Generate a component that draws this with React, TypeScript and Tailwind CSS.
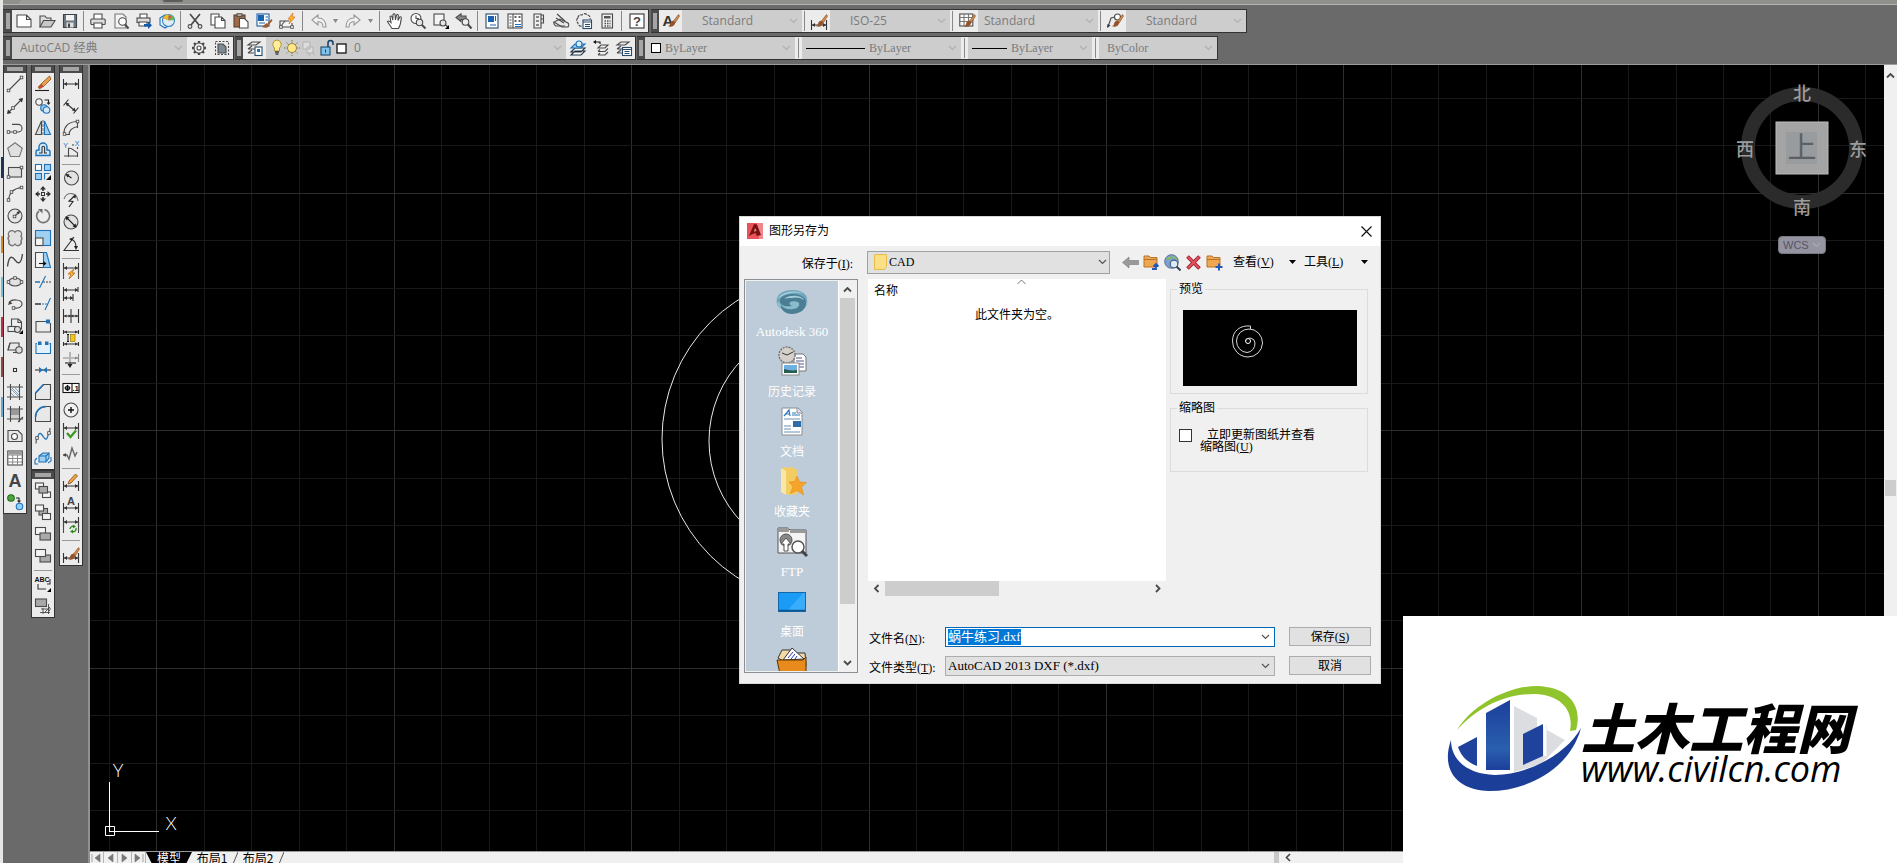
import React, { useEffect, useRef } from 'react';

const INK = '#4a4a4a';
const BLUE = '#1f72b8';
const SKY = '#9fd0f2';

type IconProps = { children: React.ReactNode; size?: number };

function Icon({ children, size = 16 }: IconProps) {
  return (
    <svg
      width={size}
      height={size}
      viewBox={`0 0 ${size} ${size}`}
      fill="none"
      stroke={INK}
      strokeWidth="1.1"
      className="shrink-0 overflow-visible"
      aria-hidden="true"
    >
      {children}
    </svg>
  );
}

// small square grip point used by the drawing tools
function Node({ x, y }: { x: number; y: number }) {
  return <rect x={x - 1.3} y={y - 1.3} width="2.6" height="2.6" fill="#f4f4f4" stroke="#444" strokeWidth=".8" />;
}

// dimension base: two vertical ticks and an arrow line
function DimBase({ y = 8 }: { y?: number }) {
  return (
    <g stroke="#333">
      <path d={`M.5 ${y - 5}v10M15.5 ${y - 5}v10M1 ${y}h14`} />
      <path d={`M1 ${y}l3 -2v4zM15 ${y}l-3 -2v4z`} fill="#333" stroke="none" />
    </g>
  );
}

function Brush() {
  return (
    <g stroke="none">
      <path d="M15.5 1.5L10.5 8l2 1.5L16.5 3z" fill="#d98a4a" stroke="#7a4a25" strokeWidth=".6" />
      <path d="M10.3 7.8c-2 .2-3 1.6-3.3 3.2-.2 1.2-1 1.8-2 2.2 3 1.2 6.5.2 7.5-3.7z" fill="#96522b" />
    </g>
  );
}

const drawIcons: [string, React.ReactNode][] = [
  ['直线', <><path d="M2 14L14 2" /><Node x={1.5} y={14.5} /><Node x={14.5} y={1.5} /></>],
  ['构造线', <><path d="M1 15L15 1" /><path d="M0 16l1-4.500 3.500 3.500zM16 0l-1 4.500L11.500 1z" fill="#333" stroke="none" /><Node x={6} y={10} /></>],
  ['多段线', <><path d="M2 12h9a4 3.800 0 0 0 0-7.600H5" /><Node x={1.5} y={12} /><Node x={8} y={12} /></>],
  ['多边形', <path d="M8 .8l7.300 5.500-2.800 8.200h-9L.7 6.300z" fill="#e0e0e0" stroke="#777" />],
  ['矩形', <><rect x="1.500" y="3.500" width="13" height="9.500" fill="#e0e0e0" /><Node x={1.5} y={13} /><Node x={14.5} y={3.5} /></>],
  ['圆弧', <><path d="M1.500 14.500C2 8 6 2.500 14.500 1.500" /><Node x={1.5} y={14} /><Node x={4.5} y={6} /><Node x={14.5} y={1.5} /></>],
  ['圆', <><circle cx="8" cy="8" r="7" fill="#e6e6e6" /><path d="M8 8l4-4" /><path d="M13 3l-1 3.500-2.500-2.500z" fill="#333" stroke="none" /><Node x={7.5} y={8.5} /></>],
  ['修订云线', <path d="M8 2.200a3.500 3.500 0 0 1 6 4 3.500 3.500 0 0 1 0 4.500 3.500 3.500 0 0 1-6 3.500 3.500 3.500 0 0 1-6-3.500 3.500 3.500 0 0 1 0-4.500 3.500 3.500 0 0 1 6-4z" fill="#e2e2e2" stroke="#777" strokeWidth="1.400" />],
  ['样条曲线', <path d="M.5 14.500C2 3 5 4 8 8s6 5 7.500-6" strokeWidth="1.400" />],
  ['椭圆', <><ellipse cx="8" cy="8" rx="6.500" ry="4" fill="#e2e2e2" /><Node x={1.5} y={8} /><Node x={14.5} y={8} /><Node x={8} y={4} /></>],
  ['椭圆弧', <><path d="M2 7C4 2.500 15 3 15 8c0 3.500-4 4.500-8 4" /><path d="M1 9l1.500-4 3 2.500z" fill="#444" stroke="none" /><Node x={6.5} y={12} /></>],
  ['插入块', <><path d="M4.500 1h7l3 3v7h-10z" fill="#eee" /><path d="M11 1v3.500h3.500" /><rect x="1" y="8.500" width="8" height="5" fill="#eee" /><circle cx="10.500" cy="11.500" r="3" fill="#ddd" /><path d="M16 12v4h-4z" fill="#000" stroke="none" /></>],
  ['创建块', <><path d="M3 3h9v7H1z" fill="#e8e8e8" /><path d="M3 3L1 10" /><circle cx="12" cy="10" r="3.200" fill="#ddd" /><path d="M6 12.500h4" /></>],
  ['点', <rect x="6.500" y="6.500" width="3" height="3" fill="#fff" stroke="#333" />],
  ['图案填充', <><path d="M3.500 0v16M12.500 0v16M0 3h16M0 13h16" /><path d="M4 5l8 8M4 9l4 4M8 4l4.500 4.500M5 4l7 7" stroke="#6a8fae" strokeWidth=".8" /></>],
  ['渐变色', <><rect x="4" y="3.500" width="8.500" height="9" fill="#9a9a9a" stroke="none" /><rect x="4" y="9" width="8.500" height="4" fill="#d0d0d0" stroke="none" /><path d="M3.500 0v16M12.500 0v16M0 3h16M0 13h16M11 16l5-5" /></>],
  ['面域', <><path d="M1 2.500h10l4 4v7H1z" fill="#e8e8e8" /><circle cx="7.500" cy="8.500" r="3" fill="#fff" /></>],
  ['表格', <><rect x=".8" y="1" width="14.500" height="14" fill="#fff" /><rect x="1.400" y="1.500" width="13.400" height="3" fill="#9a9a9a" stroke="none" /><path d="M1 5h14M1 8.500h14M1 12h14M5.700 5v10M10.500 5v10" stroke="#888" strokeWidth="1" /></>],
  ['多行文字', <text x="8" y="14.500" textAnchor="middle" fontSize="18" fontFamily="Liberation Sans" fontWeight="bold" fill="#444" stroke="none">A</text>],
  ['添加选定对象', <><circle cx="4" cy="4" r="3.300" fill="#4ba53c" stroke="#276b1d" /><circle cx="12.500" cy="12.500" r="3.300" fill="#8fd0ff" stroke={BLUE} /><path d="M9 4h3v3" stroke="#222" /><path d="M10 6.500h4L12 9z" fill="#222" stroke="none" /></>],
];

const modifyIcons: [string, React.ReactNode][] = [
  ['删除', <><path d="M14.500 0L6 8l2.500 2.500L16 3z" fill="#e9a24a" stroke="#8a4a1a" strokeWidth=".8" /><path d="M6 8l-3 3L4.500 13l4-2.500z" fill="#d4442e" stroke="#862" strokeWidth=".6" /><path d="M0 14.500h14" stroke="#222" /></>],
  ['复制', <><circle cx="4" cy="4" r="3.200" fill="#f4f4f4" /><circle cx="9" cy="10" r="3.300" fill={SKY} stroke={BLUE} /><circle cx="11.500" cy="12" r="3.300" fill="#cfe8fa" stroke={BLUE} /><path d="M9.500 2h4v3" stroke="#222" /><path d="M11.500 4.500h4l-2 2.500z" fill="#222" stroke="none" /></>],
  ['镜像', <><path d="M6.500 1v13.500h-6z" fill="#ddd" /><path d="M9.500 1v13.500h6z" fill={SKY} stroke={BLUE} /><path d="M8 0v16" stroke="#777" strokeDasharray="3 1" /></>],
  ['偏移', <><path d="M1 13.500V10a2 2 0 0 1 2-2h1V5a4 4 0 0 1 8 0v3h1a2 2 0 0 1 2 2v3.500z" fill="#cfe8fa" stroke={BLUE} strokeWidth="1.400" /><path d="M4 11h3V5.500a1.300 1.300 0 0 1 2.600 0V11H12" stroke="#333" /></>],
  ['阵列', <><rect x=".5" y=".5" width="6" height="6" fill="#fff" stroke={BLUE} /><rect x="9.500" y=".5" width="6" height="6" fill={SKY} stroke={BLUE} /><rect x=".5" y="9.500" width="6" height="6" fill={SKY} stroke={BLUE} /><path d="M9.500 15.500v-6h5" stroke={BLUE} /><path d="M16 11v5h-5z" fill="#111" stroke="none" /></>],
  ['移动', <><rect x="6.500" y="6.500" width="3" height="3" fill="#fff" stroke="#333" /><path d="M8 0l3 3.500H5zM8 16l3-3.500H5zM0 8l3.500-3v6zM16 8l-3.500-3v6z" fill="#333" stroke="none" /><path d="M8 3v2M8 11v2M3 8h2M11 8h2" stroke="#333" strokeWidth="1.600" /></>],
  ['旋转', <><path d="M4 3A6.500 6.500 0 1 0 9.500 1.700" stroke="#777" strokeWidth="1.700" /><path d="M3 1h4.500v4.500z" fill="#666" stroke="none" /></>],
  ['缩放', <><rect x=".5" y=".5" width="15" height="15" fill={SKY} stroke={BLUE} /><rect x=".5" y="8" width="7.500" height="7.500" fill="#f4f4f4" /></>],
  ['拉伸', <><path d="M.5.5h8v15h-8z" fill="#f4f4f4" /><path d="M8.500.5h3l4 15h-7z" fill={SKY} stroke={BLUE} /><path d="M4 11.500h5" stroke="#111" /><path d="M11.500 11.500L8.500 9v5z" fill="#111" stroke="none" /></>],
  ['修剪', <><path d="M0 8h5" stroke={BLUE} strokeWidth="1.500" /><path d="M8 8h8" stroke="#444" strokeDasharray="2 1" /><path d="M4.500 14l6-12" stroke={BLUE} /></>],
  ['延伸', <><path d="M0 8h6" stroke="#333" strokeWidth="1.500" /><path d="M7 8h6" stroke={BLUE} strokeDasharray="2 1" /><path d="M10 14l5.500-12" stroke={BLUE} /></>],
  ['打断于点', <><path d="M11 3.500H1v10.500h14.500V5" /><rect x="11" y="1.500" width="4" height="4" fill={BLUE} stroke="none" /></>],
  ['打断', <><path d="M2 3.500H1v10h14.500v-10h-1" fill="#e2f1fc" stroke={BLUE} /><rect x="3" y="1.500" width="3.500" height="3.500" fill={BLUE} stroke="none" /><rect x="10" y="1.500" width="3.500" height="3.500" fill={BLUE} stroke="none" /></>],
  ['合并', <><path d="M0 8h16" stroke="#333" /><path d="M8 8L4 5v6zM8 8l4-3v6z" fill={BLUE} stroke="none" /></>],
  ['倒角', <><path d="M.5 15.500V9l8-8.500h7v15z" fill="#e8e8e8" /><path d="M.5 9l8-8.500" stroke={BLUE} strokeWidth="1.600" /></>],
  ['圆角', <><path d="M.5 15.500V12C.5 5 5 .5 12 .5h3.500v15z" fill="#e8e8e8" /><path d="M.5 11C.5 5 5 .5 11 .5" stroke={BLUE} strokeWidth="1.600" /></>],
  ['光顺曲线', <><path d="M1 15.500c0-3 0-4 1-5" /><path d="M2.500 10C4 3 6 5 8.500 9s4 2 5-4" stroke={BLUE} strokeWidth="1.300" /><path d="M14.500 5l.5-5" /><Node x={2} y={10} /><Node x={14} y={5} /></>],
  ['分解', <><path d="M4 6l4-3h6v5l-3 4H4z" fill={SKY} stroke={BLUE} /><path d="M4 6h7v6M11 6l3-3M2 8l-2 2v4h3M13 13l3-2V7" stroke={BLUE} /></>],
];

const orderIcons: [string, React.ReactNode][] = [
  ['前置', <><rect x=".5" y="1" width="8" height="6" fill="#f4f4f4" /><rect x="7.500" y="10" width="8" height="5.500" fill="#f4f4f4" /><rect x="4" y="4.500" width="8.500" height="6.500" fill="#aaa" /></>],
  ['后置', <><rect x="4" y="4.500" width="8.500" height="6.500" fill="#aaa" /><rect x=".5" y="1" width="8" height="6" fill="#f4f4f4" /><rect x="7.500" y="9.500" width="8" height="6" fill="#f4f4f4" /></>],
  ['置于对象之上', <><rect x=".5" y="1.500" width="10" height="7" fill="#f4f4f4" /><rect x="5" y="7" width="10.500" height="7" fill="#aaa" /></>],
  ['置于对象之下', <><rect x="5" y="7" width="10.500" height="7" fill="#aaa" /><rect x=".5" y="1.500" width="10" height="7" fill="#f4f4f4" /></>],
];

const orderTailIcons: [string, React.ReactNode][] = [
  ['注释前置', <><text x="7" y="6" textAnchor="middle" fontSize="7" fontFamily="Liberation Sans" fontWeight="bold" fill="#111" stroke="none">ABC</text><path d="M3 8v5h8M12 8h3V3" stroke="#333" /><path d="M16 12v4h-4z" fill="#000" stroke="none" /></>],
  ['图案填充后置', <><rect x=".5" y="1" width="11" height="7.500" fill="#a8a8a8" /><path d="M6 11h10M13.500 6v10M5 14.500h10M8 10v6M9 15l6-6M12 15l3-3" strokeWidth=".9" /></>],
];

const dimIcons: ([string, React.ReactNode] | null)[] = [
  ['线性', <DimBase />],
  ['对齐', <><path d="M3 5l9 8" stroke="#333" /><path d="M.5 7.500l5-6M10.500 15.500l5-6" stroke="#333" /><path d="M2.500 4.500l4 1-2.500 3zM13 13.500l-4-1 2.500-3z" fill="#333" stroke="none" /></>],
  ['弧长', <><path d="M1 13C1 7 5 2 13.500 1.500" /><path d="M6 15c0-5 3-7.500 9-8.500" /><Node x={1.5} y={14} /><Node x={14.5} y={1.5} /><path d="M14.500 3v5M3 14.500h4" /></>],
  ['坐标', <><path d="M5.500 6v9M1 14h14M5.500 6c4 0 6 3 9 5v4" /><path d="M14.500 5v2M10 2v2" /><text x="2.500" y="6" textAnchor="middle" fontSize="7" fontFamily="Liberation Sans" fill={BLUE} stroke="none">Y</text><text x="14" y="3.500" textAnchor="middle" fontSize="7" fontFamily="Liberation Sans" fill={BLUE} stroke="none">X</text></>],
  null,
  ['半径', <><circle cx="8.500" cy="8" r="7" fill="#e2e2e2" /><path d="M8.500 8L4 5" stroke="#222" /><path d="M2.500 4l4 .5-2 3z" fill="#222" stroke="none" /></>],
  ['折弯', <><path d="M1 7C4-1 14 0 15 9" stroke="#777" /><path d="M11.500 4L6 9l4 .5L6 15" stroke="#222" /><path d="M13 2.500l-.5 4-3-2z" fill="#222" stroke="none" /></>],
  ['直径', <><circle cx="8" cy="8" r="7" fill="#e2e2e2" /><path d="M3 3l10 10" stroke="#222" /><path d="M2.500 2.500l4 1-3 3zM13.500 13.500l-4-1 3-3z" fill="#222" stroke="none" /></>],
  ['角度', <><path d="M11 1L1 14.500h15" stroke="#333" /><path d="M7.500 3c4 1 5.500 5 5.500 8" stroke="#333" /><path d="M13 14l-2-4h4zM6 3l4-1.500L9 5z" fill="#222" stroke="none" /></>],
  null,
  ['快速标注', <><DimBase y={4} /><path d="M.5 4v11M15.500 4v11" /><path d="M11 5l-6 5h3l-2 5 6-6H9z" fill="#f6c12f" stroke="#c4661a" strokeWidth=".8" /></>],
  ['基线', <><path d="M.5 1v14M15 1v5M10 8v7M1 4h14M1 12h9" stroke="#333" /><path d="M1 4l3-2v4zM15 4l-3-2v4zM1 12l3-2v4zM10 12l-3-2v4z" fill="#333" stroke="none" /></>],
  ['连续', <><path d="M.5 1v14M15.500 1v14M8 1v14M1 8h14" stroke="#333" /><path d="M1 8l2.500-1.500v3zM8 8L5.500 6.500v3zM8 8l2.500-1.500v3zM15 8l-2.500-1.500v3z" fill="#333" stroke="none" /></>],
  ['等距标注', <><path d="M.5 0v4M15.500 0v4M.5 12v4M15.500 12v4M1 2h14M1 14h14" stroke="#333" /><path d="M1 2l3-1.500v3zM15 2l-3-1.500v3zM1 14l3-1.500v3zM15 14l-3-1.500v3z" fill="#333" stroke="none" /><rect x="7.500" y="4.500" width="4.500" height="7" fill="#f5c518" stroke="#8a6a00" strokeWidth=".6" /><path d="M5 4.500v7M4 4.500h2M4 11.500h2" stroke="#111" /></>],
  ['折断标注', <><path d="M0 6h6M15.500 2v8M8 6h7M7 0v13" stroke="#888" /><path d="M2 11h11" stroke="#222" /><path d="M7 16l-2.500-4h5z" fill="#222" stroke="none" /><path d="M15 6l-3-1.500v3z" fill="#888" stroke="none" /></>],
  null,
  ['公差', <><rect x="0" y="3.500" width="16" height="9" fill="#fff" stroke="#111" /><path d="M9 3.500v9" stroke="#111" /><circle cx="4.500" cy="8" r="2" stroke="#111" /><path d="M1.500 8h6M4.500 5v6" stroke="#111" /><text x="12.500" y="11" textAnchor="middle" fontSize="8" fontFamily="Liberation Sans" fontWeight="bold" fill="#111" stroke="none">.1</text></>],
  ['圆心标记', <><circle cx="8" cy="8" r="7" fill="#f0f0f0" /><path d="M5 8h6M8 5v6" stroke="#111" strokeWidth="1.400" /></>],
  ['检验', <><DimBase y={4} /><path d="M.5 4v11M15.500 4v11" /><path d="M4 9l3.500 4L13 6.500" stroke="#3c9a28" strokeWidth="2.400" /></>],
  ['折弯线性', <><path d="M0 9h4l2 4 3-11 3 8 2-4" stroke="#666" strokeWidth="1.400" /><path d="M0 9l3-2v4z" fill="#444" stroke="none" /></>],
  null,
  ['编辑标注', <><DimBase y={12} /><path d="M12.500 0L6 7l-1 3 3-1 6.500-7z" fill="#f0a43c" stroke="#8a4a1a" strokeWidth=".8" /></>],
  ['编辑标注文字', <><DimBase y={12} /><text x="8" y="8.500" textAnchor="middle" fontSize="11" fontFamily="Liberation Sans" fontWeight="bold" fill="#444" stroke="none">A</text></>],
  ['标注更新', <><DimBase y={4} /><path d="M.5 4v11M15.500 4v11" /><path d="M7 11a3 3 0 0 1 4-2.500M13 10a3 3 0 0 1-4 3.500" stroke="#2f8a1e" strokeWidth="1.400" /><path d="M10 6.500l3 2-3 2zM10 15.500l-3-2 3-2z" fill="#2f8a1e" stroke="none" /></>],
  null,
  ['标注样式', <><DimBase y={12} /><Brush /></>],
];

type BarItem = [string, React.ReactNode] | number;

// numbers are separators with their slot width
const standardBar: BarItem[] = [
  ['新建', <path d="M1 2h9.500L15 6.500V14H1zM10.500 2v4.500H15" fill="#fff" />],
  ['打开', <><path d="M1 14V3h5l1.500 2H12v3" fill="#ddd" /><path d="M1 14l3.500-6.500H16L12 14z" fill="#c8c8c8" /></>],
  ['保存', <><path d="M1.500 1.500h13v13h-13z" fill="#6e7780" stroke="#3b4248" /><rect x="4" y="2" width="8" height="5.500" fill="#f2f2f2" stroke="none" /><rect x="4.500" y="9.500" width="7" height="5" fill="#ddd" stroke="none" /><rect x="6" y="10.500" width="2" height="4" fill="#444" stroke="none" /></>],
  5,
  ['打印', <><path d="M4 6V1h8v5" fill="#fff" /><rect x=".8" y="6" width="14.400" height="5.500" rx="1" fill="#ddd" /><path d="M4 10h8v5H4z" fill="#fff" /></>],
  ['打印预览', <><path d="M2 1h8l3 3v11H2z" fill="#f4f4f4" stroke="#777" /><circle cx="9.500" cy="8.500" r="3.800" fill="#fff" /><path d="M12 11.500l3.500 4" strokeWidth="2" /></>],
  ['发布', <><path d="M4 5V1h7v4" fill="#fff" /><rect x="1" y="5" width="13" height="4.500" fill="#ddd" /><path d="M3 9h8v4H3z" fill="#fff" /><path d="M8 11h4V8.500l4 3.800-4 3.700v-2.500H8z" fill="#1559a8" stroke="none" /></>],
  ['三维打印', <><path d="M1 5l5-3 5 3v7l-5 3-5-3z" fill="#e6f2fb" stroke={BLUE} /><circle cx="9.500" cy="7.500" r="6" fill="#ddeefa" stroke="#3982bd" /><path d="M9.500 7.500V1.500a6 6 0 0 0-5.500 4z" fill="#efb62e" stroke="none" /><path d="M9.500 7.500l6-.5a6 6 0 0 0-6-5.500z" fill="#69b54b" stroke="none" /><path d="M9.500 7.500v-5l3 1z" fill="#e5482e" stroke="none" /></>],
  5,
  ['剪切', <><path d="M3 1l9 11M13 1L4 12" strokeWidth="1.700" /><circle cx="3" cy="13.500" r="1.900" /><circle cx="13" cy="13.500" r="1.900" /></>],
  ['复制', <><path d="M1 1h8v11H1z" fill="#fff" /><path d="M5 4h6.500L15 7.500V15H5zM11.500 4v3.500H15" fill="#fff" /></>],
  ['粘贴', <><rect x="1" y="2" width="11" height="12" fill="#9c6a48" stroke="#5f412c" /><rect x="4" y=".8" width="5" height="2.500" fill="#ccc" /><path d="M6.500 5.500h5L15 9v6H6.500z" fill="#fff" /></>],
  ['特性匹配', <><rect x="1" y="1" width="12" height="12" fill="#fff" stroke="#1a5ea0" /><rect x="2" y="2" width="6" height="6" fill="#1a62b0" stroke="none" /><path d="M9.500 4h2.500M9.500 7h2.500M3 10h6" stroke="#1a62b0" /><path d="M15.500 6l-4 4 1.500 1.500 3.500-4zM11 10c-2 .5-3 3-5 4 3 1.500 6.500 1 7-2z" fill="#a05a2c" stroke="none" /></>],
  ['块编辑器', <><path d="M10 8H1v6h12v-4" fill="#f4f4f4" /><path d="M1 14l5-6" /><Node x={2} y={14} /><Node x={13} y={14} /><path d="M14 0L9 6h2.500L10 11l6-7h-3z" fill="#f9b82b" stroke="#d9701d" strokeWidth=".7" /></>],
  9,
];

const editBarEnd: BarItem[] = [
  7,
  ['实时平移', <path d="M5 15.500C3.500 13 1.500 10.500.5 8.500c1-1 2-.5 3.500 1L3 3.500c.8-1 1.800-.5 2 .5l.8 3L6 1.500c.6-1 1.700-1 2 0L8.500 7l1-5c.7-1 1.800-.5 1.800.5L11 7.500l1.800-3.500c1-.6 1.700 0 1.500 1-.3 4-1 7.500-2.800 10.500z" fill="#fff" />],
  ['实时缩放', <><circle cx="6" cy="5.500" r="5" fill="#fff" /><path d="M6 2.500v3h3" /><circle cx="9.500" cy="9.500" r="3.200" fill="#e6e6e6" /><path d="M12 12l3.500 3.500" strokeWidth="2" /></>],
  ['窗口缩放', <><rect x="1" y="1" width="10" height="11" fill="#f4f4f4" /><circle cx="10" cy="10" r="3" fill="#e6e6e6" /><path d="M12.500 12l2.500 2" strokeWidth="1.500" /><path d="M16 12v4h-4z" fill="#000" stroke="none" /></>],
  ['缩放上一个', <><path d="M0 4.500L5 .8v2.200h5v3.500H5v2z" fill="#888" /><circle cx="9.500" cy="9" r="3.300" fill="#eee" /><path d="M12 11.500l3.500 4" strokeWidth="2" /></>],
  5,
  ['特性', <><rect x="2" y="1" width="12" height="14" fill="#fff" stroke="#284b6c" /><rect x="4" y="3" width="6" height="6" fill="#1a62b0" stroke="none" /><path d="M11.500 3v5M6 12h6" stroke="#1a62b0" /></>],
  ['设计中心', <><rect x="1" y="1" width="14" height="14" fill="#fff" /><path d="M6 1v14" /><path d="M2.500 4h2M2.500 7h2M2.500 10h2M2.500 13h2" /><path d="M7.500 3h2v2h-2zM11.500 3h2v2h-2zM7.500 7h2v2h-2zM11.500 7h2v2h-2z" fill="#666" stroke="none" /><path d="M8 11.500h6M8 13.500h6" stroke={BLUE} /></>],
  ['工具选项板', <><path d="M4 1h7v14H4z" fill="#eee" /><path d="M11 2h2.500v4H11M11 6h2.500v4H11" /><path d="M6 3h3v2H6zM6 7h3v2H6zM6 11h3v2H6z" fill="#888" stroke="none" /></>],
  ['图纸集管理器', <><path d="M1 9l8 5h6c1-1 1-3 0-4L7 6z" fill="#e8e8e8" /><path d="M4 1l8 7M3 5l8 5" /><path d="M1 9c-.5 2 0 3 2 4h9" /></>],
  ['标记集管理器', <><path d="M2 5a3 3 0 0 1 4-3 3 3 0 0 1 5 0 3 3 0 0 1 3 4" strokeDasharray="3 1" /><path d="M2 5a3 3 0 0 0 0 5 3 3 0 0 0 4 3" strokeDasharray="3 1" /><rect x="7" y="7" width="8.500" height="8.500" fill="#fff" stroke="#284b6c" /><path d="M7 9h8.500M9 11.500h5M9 13.500h5" stroke="#284b6c" /></>],
  ['快速计算器', <><rect x="3" y="1" width="10.500" height="14" fill="#f0f0f0" /><rect x="5" y="3" width="6.500" height="2.500" fill="#555" stroke="none" /><path d="M5.500 8h6M5.500 10.500h6M5.500 13h6" strokeDasharray="1.500 1" strokeWidth="1.500" /></>],
  7,
  ['帮助', <><rect x="1" y="1" width="14" height="14" fill="#fff" stroke="#333" /><text x="8" y="13" textAnchor="middle" fontSize="13" fontFamily="Liberation Sans" fontWeight="bold" fill="#444" stroke="none">?</text></>],
];

function Grip({ wide = false }: { wide?: boolean }) {
  return (
    <div className={`flex shrink-0 items-center justify-center bg-[#4b4b4b] ${wide ? 'w-[9px]' : 'w-2'}`}>
      <div className="h-4 w-1 bg-[radial-gradient(#a5a5a5_1px,transparent_1px)] bg-[size:2px_2px]"></div>
    </div>
  );
}

function Toolbar({ children, wide }: { children: React.ReactNode; wide?: boolean }) {
  return (
    <div className="flex h-6 shrink-0 border-y border-r border-[#333] bg-[#ececec]">
      <Grip wide={wide} />
      {children}
    </div>
  );
}

function ToolButton({ label, children }: { label: string; children: React.ReactNode }) {
  return (
    <button aria-label={label} className="flex w-[23px] shrink-0 items-center justify-center">
      <Icon>{children}</Icon>
    </button>
  );
}

function BarItems({ items }: { items: BarItem[] }) {
  return (
    <>
      {items.map((item, i) =>
        typeof item === 'number' ? (
          <div key={i} className="flex shrink-0 justify-center py-px" style={{ width: item }}>
            <div className="w-px bg-[#888]"></div>
          </div>
        ) : (
          <ToolButton key={i} label={item[0]}>{item[1]}</ToolButton>
        )
      )}
    </>
  );
}

function Chevron({ className = '' }: { className?: string }) {
  return (
    <svg width="9" height="6" viewBox="0 0 9 6" className={`pointer-events-none shrink-0 ${className}`} fill="none" stroke="currentColor" strokeWidth="1.2" aria-hidden="true">
      <path d="M1 1l3.500 3.500L8 1" />
    </svg>
  );
}

type DropProps = { label: string; value: string; box: string; text?: string; lead?: React.ReactNode };

function Drop({ label, value, box, text = '', lead }: DropProps) {
  return (
    <div className={`flex shrink-0 items-center bg-[#cdcdcd] pr-1 text-[#7b7b7b] ${box}`}>
      {lead}
      <select aria-label={label} className={`h-full min-w-0 flex-1 appearance-none bg-transparent text-xs outline-none ${text}`} defaultValue={value}>
        <option>{value}</option>
      </select>
      <Chevron className="text-[#b0b0b0]" />
    </div>
  );
}

function Palette({ children }: { children: React.ReactNode }) {
  return (
    <div className="flex w-6 flex-col border-x border-b border-[#333] bg-[#ececec]">{children}</div>
  );
}

function PaletteGrip() {
  return (
    <div className="flex h-2 shrink-0 items-center justify-center bg-[#4b4b4b]">
      <div className="h-1 w-4 bg-[radial-gradient(#a5a5a5_1px,transparent_1px)] bg-[size:2px_2px]"></div>
    </div>
  );
}

function PaletteItems({ items }: { items: ([string, React.ReactNode] | null)[] }) {
  return (
    <>
      {items.map((item, i) =>
        item ? (
          <button key={i} aria-label={item[0]} className="flex h-[22px] w-full shrink-0 items-center justify-center">
            <Icon>{item[1]}</Icon>
          </button>
        ) : (
          <div key={i} className="flex h-[6px] shrink-0 items-center px-0.5">
            <div className="h-px w-full bg-[#999]"></div>
          </div>
        )
      )}
    </>
  );
}

function LayerLead() {
  return (
    <svg width="84" height="18" viewBox="0 0 84 18" className="ml-1 shrink-0" fill="none" aria-hidden="true">
      <path d="M7 1a4.500 4.500 0 0 1 2.500 8v3h-5V9A4.500 4.500 0 0 1 7 1z" fill="#ffef9a" stroke="#b9962c" />
      <path d="M5 13h4M5.500 15h3" stroke="#444" strokeWidth="1.400" />
      <path d="M22 1v16M14 9h16M16.500 3.500l11 11M27.500 3.500l-11 11" stroke="#7a7042" strokeDasharray="1.500 1" />
      <circle cx="22" cy="9" r="4.500" fill="#ffe88a" stroke="#a08a3a" />
      <path d="M33 3h7v7h-7zM37 8h6v6h-6z" fill="#ddd" stroke="#b3b3b3" />
      <path d="M38 14l2 3M42 13l3 3" stroke="#b3b3b3" />
      <rect x="51" y="8" width="9" height="8" fill="#7fc4ef" stroke="#123f66" />
      <path d="M58 8V4a2.500 2.500 0 0 1 5 0v2" stroke="#123f66" strokeWidth="1.500" />
      <path d="M55.500 10.500v3" stroke="#123f66" />
      <rect x="67" y="5" width="9" height="9" fill="#fff" stroke="#111" strokeWidth="1.300" />
    </svg>
  );
}

const layerSheets = <path d="M1 5l4-3h8l-4 3zM1 9l4-3M1 9h7M1 13l4-3M1 13h6" fill="none" />;

function Toolbars() {
  return (
    <header className="shrink-0 border-b border-[#9c9c9c] bg-[#6a6a6a]">
      <div className="flex h-[5px] border-b border-[#b4b4b0] bg-[#8f908c]">
        <div className="ml-4 h-full w-36 rounded-t-sm bg-[#9b9c98]"></div>
        <div className="h-0.5 w-5 rounded-b bg-[#5c5c5c]"></div>
      </div>
      <div className="flex flex-col gap-[3px] pt-1 pb-1">
        <div className="flex gap-0.5">
          <Toolbar wide>
            <BarItems items={standardBar} />
            <button aria-label="放弃" className="flex w-[23px] items-center justify-center">
              <Icon><path d="M1 7l6-5v3c5 0 8 3 8 9h-3c0-4-2-5.500-5-5.500v3.500z" fill="#f2f2f2" stroke="#999" /></Icon>
            </button>
            <button aria-label="放弃列表" className="flex w-[11px] items-center justify-center text-[#888]">
              <svg width="5" height="4" viewBox="0 0 5 4" aria-hidden="true"><path d="M0 0h5L2.500 4z" fill="currentColor" /></svg>
            </button>
            <button aria-label="重做" className="flex w-[23px] items-center justify-center">
              <Icon><path d="M15 7L9 2v3c-5 0-8 3-8 9h3c0-4 2-5.500 5-5.500v3.500z" fill="#f2f2f2" stroke="#999" /></Icon>
            </button>
            <button aria-label="重做列表" className="flex w-3 items-center justify-center text-[#888]">
              <svg width="5" height="4" viewBox="0 0 5 4" aria-hidden="true"><path d="M0 0h5L2.500 4z" fill="currentColor" /></svg>
            </button>
            <BarItems items={editBarEnd} />
          </Toolbar>
          <Toolbar>
            <ToolButton label="文字样式">
              <text x="5" y="12.500" textAnchor="middle" fontSize="15" fontFamily="Liberation Sans" fontWeight="bold" fill="#333" stroke="none">A</text>
              <Brush />
            </ToolButton>
            <Drop label="文字样式" value="Standard" box="w-[120px]" text="pl-5" />
            <BarItems items={[5]} />
            <ToolButton label="标注样式"><DimBase y={12} /><Brush /></ToolButton>
            <Drop label="标注样式" value="ISO-25" box="w-[120px]" text="pl-5" />
            <BarItems items={[5]} />
            <ToolButton label="表格样式">
              <rect x=".8" y="1" width="13" height="12" fill="#fff" />
              <path d="M1 4.500h13M1 8.500h12M5 1v12M9.500 1v12" stroke="#777" />
              <Brush />
            </ToolButton>
            <Drop label="表格样式" value="Standard" box="w-[120px]" text="pl-1.5" />
            <BarItems items={[5]} />
            <ToolButton label="多重引线样式">
              <path d="M1 14L4 5l4-1" />
              <circle cx="10.500" cy="4" r="3" fill="#fff" />
              <path d="M0 15l.5-4 3 1.500z" fill="#333" stroke="none" />
              <Brush />
            </ToolButton>
            <Drop label="多重引线样式" value="Standard" box="w-[120px]" text="pl-5" />
          </Toolbar>
        </div>
        <div className="flex gap-px">
          <Toolbar wide>
            <Drop label="工作空间" value="AutoCAD 经典" box="w-[175px]" text="pl-2" />
            <ToolButton label="工作空间设置">
              <path d="M8 1v2M8 13v2M1 8h2M13 8h2M3 3l1.500 1.500M11.500 11.500L13 13M13 3l-1.500 1.500M4.500 11.500L3 13" strokeWidth="2.400" />
              <circle cx="8" cy="8" r="5" fill="#f0f0f0" />
              <circle cx="8" cy="8" r="2" fill="#fff" />
            </ToolButton>
            <ToolButton label="我的工作空间">
              <rect x="1.500" y="1.500" width="13" height="13" strokeDasharray="2 1.500" />
              <path d="M4 4h5l3 3v6H4z" fill="#7d8b95" />
            </ToolButton>
          </Toolbar>
          <Toolbar>
            <ToolButton label="图层特性管理器">
              {layerSheets}
              <rect x="8" y="7" width="7" height="8.500" fill="#fff" stroke="#284b6c" />
              <rect x="10" y="9" width="3" height="3" fill={BLUE} stroke="none" />
            </ToolButton>
            <Drop label="图层" value="0" box="w-[300px]" lead={<LayerLead />} />
            <ToolButton label="将对象的图层置为当前">
              <path d="M1 12l4-4h10l-4 4zM1 15l4-4h10l-4 4z" fill="#fff" stroke="#234" />
              <path d="M1 8l4-4h10l-4 4z" fill={SKY} stroke={BLUE} />
              <circle cx="9" cy="4" r="3" fill="#d7ecfb" stroke={BLUE} />
            </ToolButton>
            <ToolButton label="上一个图层">
              <path d="M5 8l3-3h7l-3 3zM5 11.500l2-2M5 11.500h7l3-3M5 15l2-2M5 15h7l3-3" />
              <path d="M2 2h5v2" stroke="#111" /><path d="M0 2l3-2v4z" fill="#111" stroke="none" />
            </ToolButton>
            <ToolButton label="图层状态管理器">
              {layerSheets}
              <rect x="6.500" y="7.500" width="9" height="8" fill="#fff" stroke="#284b6c" />
              <path d="M6.500 9.500h9M8.500 11.500h5M8.500 13.500h5" stroke="#284b6c" />
            </ToolButton>
          </Toolbar>
          <Toolbar>
            <Drop
              label="颜色"
              value="ByLayer"
              box="w-[150px]"
              text="pl-1 font-['Liberation_Serif',serif]"
              lead={<span className="ml-1.5 size-2.5 shrink-0 border border-black bg-white"></span>}
            />
            <BarItems items={[7]} />
            <Drop
              label="线型"
              value="ByLayer"
              box="w-[159px]"
              text="pl-1 font-['Liberation_Serif',serif]"
              lead={<span className="ml-1 h-px w-[59px] shrink-0 bg-black"></span>}
            />
            <BarItems items={[7]} />
            <Drop
              label="线宽"
              value="ByLayer"
              box="w-[124px]"
              text="pl-1 font-['Liberation_Serif',serif]"
              lead={<span className="ml-1 h-px w-[35px] shrink-0 bg-black"></span>}
            />
            <BarItems items={[7]} />
            <Drop label="打印样式" value="ByColor" box="w-[118px]" text="pl-2 font-['Liberation_Serif',serif]" />
          </Toolbar>
        </div>
      </div>
    </header>
  );
}

// grid spacing 47.47, every fifth line is brighter
const gridX = Array.from({ length: 80 }, (_, i) => ({ pos: Math.round(19 + 47.47 * i), major: i % 5 === 1 }));
const gridY = Array.from({ length: 40 }, (_, i) => ({ pos: Math.round(33 + 47.47 * i), major: i % 5 === 2 }));

function Canvas() {
  return (
    <div className="relative min-h-0 flex-1 overflow-hidden bg-black">
      <svg className="absolute inset-0 size-full" fill="none" aria-hidden="true">
        {gridX.map((g, i) => (
          <rect key={i} x={g.pos} y="0" width="1" height="2000" fill={g.major ? '#2b2f2f' : '#171a1a'} />
        ))}
        {gridY.map((g, i) => (
          <rect key={i} x="0" y={g.pos} width="4000" height="1" fill={g.major ? '#2b2f2f' : '#171a1a'} />
        ))}
        <circle cx="737" cy="374" r="165" stroke="#e8e8e8" strokeWidth="1" />
        <circle cx="736" cy="376" r="117" stroke="#e8e8e8" strokeWidth="1" />
      </svg>

      <svg className="absolute bottom-3 left-3 font-['Lato',sans-serif] font-light" width="90" height="80" viewBox="0 0 90 80" fill="none" stroke="#fff" aria-hidden="true">
        <path d="M7.500 23v49M7 72.500h50M3.500 67.500h9v9h-9z" />
        <text x="16" y="18" textAnchor="middle" fontSize="18" fill="#fff" stroke="none">Y</text>
        <text x="69" y="71" textAnchor="middle" fontSize="18" fill="#fff" stroke="none">X</text>
      </svg>

      <div className="absolute top-[13px] right-3 flex flex-col items-center gap-[18px]">
        <svg width="140" height="140" viewBox="0 0 140 140" className="font-['Noto_Sans_CJK_SC',sans-serif] font-medium" textAnchor="middle" fill="#9c9c9c" fontSize="18">
          <circle cx="70" cy="70" r="54" fill="none" stroke="#2b2b2b" strokeWidth="14" />
          <rect x="44" y="44" width="52" height="52" fill="#a4a4a4" stroke="#bbb" />
          <rect x="54" y="54" width="31" height="32" fill="#999c9e" />
          <text x="70" y="80" fontSize="29" fill="#5c6066" fontWeight="400">上</text>
          <text x="70" y="22">北</text>
          <text x="70" y="136">南</text>
          <text x="13" y="78">西</text>
          <text x="126" y="78">东</text>
        </svg>
        <button className="flex h-[18px] w-12 items-center rounded border border-[#777785] bg-[#9494a0] px-1 font-['Liberation_Sans',sans-serif] text-[11px] text-[#55556a]">
          <span className="flex-1 text-left">WCS</span>
          <Chevron className="text-[#a9a9b8]" />
        </button>
      </div>
    </div>
  );
}

function SheetTabs() {
  return (
    <div className="flex h-3 shrink-0 overflow-hidden border-t border-[#999] bg-[#f0f0f0] font-['Noto_Sans_CJK_SC',sans-serif] text-xs leading-3 text-black">
      {['M2 2v8M10 2v8L5 6z', 'M9 2v8L4 6z', 'M4 2v8l5-4z', 'M3 2v8l5-4zM11 2v8'].map((d) => (
        <button key={d} aria-label="布局滚动" className="flex w-[14px] shrink-0 border-r border-[#b5b5b5]">
          <svg width="13" height="12" viewBox="0 0 13 12" fill="#777" stroke="#777" strokeWidth=".6" aria-hidden="true"><path d={d} /></svg>
        </button>
      ))}
      <button className="h-full w-[46px] shrink-0 bg-black text-white [clip-path:polygon(0_0,100%_0,88%_100%,12%_100%)]">模型</button>
      <button className="w-10 shrink-0">布局1</button>
      <Slash />
      <button className="w-10 shrink-0">布局2</button>
      <Slash />
      <div className="flex-1"></div>
      <div className="w-[5px] shrink-0 bg-[#c8c8c8]"></div>
      <div className="w-[618px] shrink-0 bg-[#f0f0f0] pl-1.5">
        <svg width="6" height="10" viewBox="0 0 6 10" fill="none" stroke="#444" strokeWidth="1.6" aria-hidden="true"><path d="M5 2L1.500 5.500 5 9" /></svg>
      </div>
    </div>
  );
}

function Slash() {
  return (
    <svg width="6" height="12" viewBox="0 0 6 12" className="shrink-0" stroke="#555" aria-hidden="true"><path d="M6 0L1 12" /></svg>
  );
}

const places: { name: string; art: React.ReactNode }[] = [
  {
    name: 'Autodesk 360',
    art: (
      <>
        <ellipse cx="16" cy="16" rx="15.500" ry="10" fill="#8bbccc" />
        <path d="M1 17C-1 8 8 4 17 4c8 0 14 4 14 9 0 1 0 3-1 4 0-6-7-8-14-7-6 0-9 3-9 6-3 0-5 0-6 1z" fill="#6ea6bb" />
        <path d="M4 16C3 11 9 8 17 8c8 0 13 4 13 8 1 7-6 12-14 12-7 0-12-5-11-9 3 4 8 5 12 4 4 0 7-3 6-6-2-2-6-2-9-1-1 2 0 3 2 4-7 1-12-1-12-4z" fill="#4b7e95" />
        <path d="M8 13c5-5 18-4 20 1-4-3-9-3-13-2-3 0-5 0-7 1z" fill="#a5cfda" />
        <path d="M2 13C5 6 20 3 27 8 19 5 8 7 2 13z" fill="#b6d9e3" />
      </>
    ),
  },
  {
    name: '历史记录',
    art: (
      <>
        <path d="M18 8h9l3 3v14H18z" fill="#fff" stroke="#777" />
        <path d="M20 12h6M20 15h8M20 18h8M20 21h8" stroke="#558" />
        <circle cx="11" cy="9" r="8" fill="#d5d0c9" stroke="#777" strokeWidth="1.500" strokeDasharray="2 1" />
        <path d="M11 9l6-3M11 9L6 7" stroke="#333" />
        <rect x="6" y="17" width="17" height="12" fill="#fff" stroke="#888" />
        <rect x="8" y="19" width="13" height="8" fill="#6fb0e0" />
        <path d="M8 23c4 1 8 2 13 1v3H8z" fill="#275c4f" />
      </>
    ),
  },
  {
    name: '文档',
    art: (
      <>
        <path d="M6 2h16l4 4v23H6z" fill="#fff" stroke="#8a8f94" />
        <path d="M21 2v5h5" fill="#dde" stroke="#8a8f94" />
        <path d="M8 10l5-6 1 6M10 8h4M16 7h4M16 9h8" stroke="#2a7bc0" strokeWidth="1.200" fill="none" />
        <path d="M8 13h16M8 20h7M8 23h7M8 26h16" stroke="#6d8fae" />
        <rect x="17" y="15" width="8" height="6" fill="#2f6da8" />
      </>
    ),
  },
  {
    name: '收藏夹',
    art: (
      <>
        <path d="M5 2l10-1 7 3v24l-8 1-9-3z" fill="#f3cd63" />
        <path d="M5 2l5 3v24l-5-3z" fill="#fbe7a4" />
        <path d="M21 10l2.500 6 7 .5-5 4.500 2 8-6.500-4.500-6.500 3 2.500-7-4-4.500 6-.5z" fill="#f7a52a" stroke="#e08a18" strokeWidth=".6" />
      </>
    ),
  },
  {
    name: 'FTP',
    art: (
      <>
        <path d="M2 5V2h10l2 2h16v23H2z" fill="#f4f4f4" stroke="#555" />
        <path d="M2 2h11v4H2zM14 4h16v3H14z" fill="#9a9a9a" />
        <circle cx="10" cy="14" r="6" fill="#888" stroke="#555" />
        <path d="M10 12l5 6h-3v7H8v-7H5z" fill="#fff" stroke="#555" />
        <circle cx="22" cy="21" r="6" fill="#fff" stroke="#555" strokeWidth="1.500" />
        <path d="M26 25l5 5" stroke="#444" strokeWidth="3" />
      </>
    ),
  },
  {
    name: '桌面',
    art: (
      <>
        <rect x="2.500" y="6.500" width="27" height="19" fill="#1a9bf5" stroke="#1467a8" />
        <path d="M12 24L27 7h2v17z" fill="#38adfa" />
        <path d="M3 24.500h26" stroke="#0c5792" strokeWidth="1.500" />
      </>
    ),
  },
  {
    name: '',
    art: (
      <>
        <path d="M2 12l4-8h9l3 3h11l1 12-2 8z" fill="#f3d9a4" stroke="#333" />
        <path d="M7 14l9-12 12 11z" fill="#fff" stroke="#333" />
        <path d="M12 12l5-6M15 13l4-5M19 13l2-3" stroke="#33a" />
        <path d="M1 14h26l3-3v17H4z" fill="#e88b1c" stroke="#5a3206" />
      </>
    ),
  },
];

function Caret({ d, className = '' }: { d: string; className?: string }) {
  return (
    <svg width="9" height="9" viewBox="0 0 9 9" fill="none" stroke="#4a4a4a" strokeWidth="1.8" className={`shrink-0 ${className}`} aria-hidden="true">
      <path d={d} />
    </svg>
  );
}

const UP = 'M1 6.500L4.500 3 8 6.500';
const DOWN = 'M1 3l3.500 3.500L8 3';
const LEFT = 'M6.500 1L3 4.500 6.500 8';
const RIGHT = 'M3 1l3.500 3.500L3 8';

function PlacesBar() {
  return (
    <nav className="flex h-[394px] w-[114px] shrink-0 border border-[#8a8f96] bg-[#f0f0f0] p-px">
      <ul className="flex flex-1 flex-col overflow-hidden bg-[#becbd8]">
        {places.map((p) => (
          <li key={p.name} className="h-[60px] shrink-0">
            <button className="flex w-full flex-col items-center text-xs text-white" aria-label={p.name || '我的文件'}>
              <svg width="32" height="32" viewBox="0 0 32 32" fill="none" className="mt-[5px]" aria-hidden="true">{p.art}</svg>
              <span className={`mt-1.5 leading-4 ${/^[A-Z]/.test(p.name) ? 'text-[13px]' : ''}`}>{p.name}</span>
            </button>
          </li>
        ))}
      </ul>
      <div className="flex w-[18px] shrink-0 flex-col items-center border-l border-white">
        <Caret d={UP} className="my-1" />
        <div className="h-[306px] w-[15px] bg-[#cdcdcd]"></div>
        <div className="flex-1"></div>
        <Caret d={DOWN} className="my-1" />
      </div>
    </nav>
  );
}

function NavIcon({ label, children }: { label: string; children: React.ReactNode }) {
  return (
    <button aria-label={label} className="flex w-[21px] items-center justify-center">
      <svg width="17" height="17" viewBox="0 0 17 17" fill="none" aria-hidden="true">{children}</svg>
    </button>
  );
}

const folder = <path d="M1 3.500V2h5l1.500 1.500H14V13H1zM1 5.500h13" fill="#efa84f" stroke="#b9722a" />;

function SaveDialog() {
  const fileRef = useRef<HTMLInputElement>(null);

  useEffect(() => {
    fileRef.current?.focus();
    fileRef.current?.select();
  }, []);

  return (
    <div
      role="dialog"
      aria-labelledby="dlg-title"
      className="absolute top-[216px] left-[739px] flex w-[642px] flex-col border border-[#d8d8d8] bg-[#f0f0f0] pb-[7px] font-['Liberation_Serif','Noto_Sans_CJK_SC',serif] text-xs text-black"
    >
      <div className="flex h-[29px] items-center bg-white pr-1.5 pb-px pl-[7px]">
        <svg width="16" height="16" viewBox="0 0 16 16" aria-hidden="true">
          <rect width="16" height="16" fill="#e8525a" />
          <path d="M10 0h6v16h-4z" fill="#f0868a" />
          <path d="M2 13L7 1l3 .5L14 12l-4 1-1.500-3-3 1z" fill="#7d1013" />
          <path d="M7 8.500L8 5l1.500 3z" fill="#f29a98" />
        </svg>
        <h1 id="dlg-title" className="ml-1.5 flex-1 text-xs">图形另存为</h1>
        <button aria-label="关闭" className="flex size-4 items-center justify-center">
          <svg width="11" height="11" viewBox="0 0 11 11" stroke="#111" strokeWidth="1.2" aria-hidden="true"><path d="M.5.5l10 10M10.500.5l-10 10" /></svg>
        </button>
      </div>

      <div className="flex h-[33px] items-center pr-3 pb-px">
        <label htmlFor="save-in" className="w-[128px] pt-1 pr-3.5 text-right">保存于(<u>I</u>):</label>
        <div className="flex h-[23px] w-[245px] items-center border border-[#a0a0a0] bg-[#e1e1e1] pr-0.5 pl-1.5">
          <svg width="13" height="16" viewBox="0 0 13 16" aria-hidden="true"><path d="M.5.5h12v12l-2 3H.5z" fill="#fbdf84" stroke="#e5bd48" /></svg>
          <select id="save-in" className="flex-1 appearance-none bg-transparent pl-0.5 text-xs outline-none" defaultValue="CAD">
            <option>CAD</option>
          </select>
          <Chevron className="text-[#555]" />
        </div>
        <div className="ml-2.5 flex items-center">
          <NavIcon label="返回"><path d="M.5 8.500L7 3v3.500h9.500v4H7V14z" fill="#9a9a9a" stroke="#777" strokeWidth=".6" /></NavIcon>
          <NavIcon label="上一级">{folder}<path d="M9 15h4V11M10.500 12.500L13 10l2.500 2.500" stroke="#2458b8" strokeWidth="1.800" /></NavIcon>
          <NavIcon label="搜索 Web">
            <circle cx="7.500" cy="7.500" r="6.800" fill="#7f9fd0" stroke="#5b6f98" />
            <path d="M2 5c2-3 4-3 5-2s-1 3-3 3zM8 2c3 0 5 2 5 4l-3-1z" fill="#86b96a" />
            <circle cx="10" cy="10" r="3.800" fill="#dceaf7" stroke="#445f80" strokeWidth="1.200" />
            <path d="M12.500 12.500l4 4" stroke="#345" strokeWidth="2" />
          </NavIcon>
          <NavIcon label="删除"><path d="M2.500 2.500l12 12M14.500 2.500l-12 12" stroke="#9e1f2c" strokeWidth="3.800" /><path d="M3 3l11 11M14 3L3 14" stroke="#e0525e" strokeWidth="2" /></NavIcon>
          <NavIcon label="创建新文件夹">{folder}<path d="M13 9.500v7M9.500 13h7" stroke="#2458b8" strokeWidth="2" /></NavIcon>
          <button className="ml-2 flex w-[71px] items-center justify-between">
            <span>查看(<u>V</u>)</span>
            <svg width="7" height="4" viewBox="0 0 7 4" className="mr-2" aria-hidden="true"><path d="M0 0h7L3.500 4z" /></svg>
          </button>
          <button className="flex w-16 items-center justify-between">
            <span>工具(<u>L</u>)</span>
            <svg width="7" height="4" viewBox="0 0 7 4" aria-hidden="true"><path d="M0 0h7L3.500 4z" /></svg>
          </button>
        </div>
      </div>

      <div className="flex gap-2.5 pl-1">
        <PlacesBar />
        <div className="flex h-[397px] flex-1 flex-col justify-between">
          <div className="flex gap-1">
            <div className="w-[298px] shrink-0">
              <div className="h-[302px] bg-white">
                <svg width="9" height="6" viewBox="0 0 9 6" fill="none" stroke="#777" className="ml-[149px]" aria-hidden="true"><path d="M.5 5L4.500 1l4 4" /></svg>
                <div className="pl-1.5 leading-3">名称</div>
                <p className="mt-2.5 text-center leading-4">此文件夹为空。</p>
              </div>
              <div className="flex h-[15px] items-center justify-between px-1">
                <Caret d={LEFT} />
                <div className="ml-1 h-full w-[114px] bg-[#cdcdcd]"></div>
                <div className="flex-1"></div>
                <Caret d={RIGHT} />
              </div>
            </div>
            <div className="flex flex-col gap-[5px] pt-px">
              <fieldset className="h-[114px] w-[198px] border border-[#dcdcdc] pr-2 pl-3">
                <legend className="-ml-1.5 px-0.5 leading-[18px]">预览</legend>
                <svg width="174" height="76" viewBox="0 0 174 76" fill="none" stroke="#d8d8d8" className="mt-3 max-w-none bg-black" aria-label="图形预览">
                  <circle cx="65" cy="31" r="2.500" stroke="#fff" />
                  <path d="M62.500 31a5 5 0 0 1 9.500 2 8.500 9 0 0 1-8 9.500A11 11.500 0 0 1 53.500 31 12.500 12 0 0 1 66 19a13.500 14 0 0 1 13.500 14A14.500 14.500 0 0 1 65 47 16 15.500 0 0 1 49.500 31C49.500 21 57 15 67.500 16v3" />
                </svg>
              </fieldset>
              <fieldset className="h-[73px] w-[198px] border border-[#dcdcdc] pl-2">
                <legend className="-ml-0.5 px-0.5 leading-[18px]">缩略图</legend>
                <label className="flex items-start pt-3 leading-3">
                  <input type="checkbox" className="size-[13px] shrink-0 appearance-none border border-[#333] bg-white" />
                  <span className="pl-2 indent-[7px]">立即更新图纸并查看<span className="block indent-0">缩略图(<u>U</u>)</span></span>
                </label>
              </fieldset>
            </div>
          </div>

          <div className="grid grid-cols-[76px_330px_82px] items-start gap-y-[9px] pl-px">
            <label htmlFor="file-name" className="pt-1 leading-4">文件名(<u>N</u>):</label>
            <div className="flex h-5 items-center border border-[#0067b8] bg-white pr-1 pl-0.5">
              <input
                id="file-name"
                ref={fileRef}
                defaultValue="蜗牛练习.dxf"
                className="min-w-0 flex-1 bg-transparent text-[13px] leading-4 outline-none selection:bg-[#0078d7] selection:text-white"
              />
              <Chevron className="text-[#555]" />
            </div>
            <button className="ml-[14px] h-[19px] w-[82px] border border-[#adadad] bg-[#e1e1e1] leading-4">保存(<u>S</u>)</button>
            <label htmlFor="file-type" className="pt-1 leading-4">文件类型(<u>T</u>):</label>
            <div className="flex h-5 items-center border border-[#adadad] bg-[#e1e1e1] pr-1 pl-0.5">
              <select id="file-type" className="min-w-0 flex-1 appearance-none bg-transparent text-[13px] leading-4 outline-none" defaultValue="dxf">
                <option value="dxf">AutoCAD 2013 DXF (*.dxf)</option>
              </select>
              <Chevron className="text-[#555]" />
            </div>
            <button className="ml-[14px] h-[19px] w-[82px] border border-[#adadad] bg-[#e1e1e1] leading-4">取消</button>
          </div>
        </div>
      </div>
    </div>
  );
}

function SiteBadge() {
  return (
    <a href="#" className="absolute right-0 bottom-0 flex h-[247px] w-[494px] items-center bg-white pl-[44px] text-black">
      <svg width="134" height="108" viewBox="0 0 134 108" className="mb-1 shrink-0" aria-hidden="true">
        <defs>
          <linearGradient id="tower" x1="0" y1="0" x2="0" y2="1">
            <stop offset="0" stopColor="#1c3f9c" />
            <stop offset=".7" stopColor="#2a5fae" />
            <stop offset="1" stopColor="#1c3f9c" />
          </linearGradient>
        </defs>
        <path d="M67 22l23 12v12l10-5v5l18 10-24 24-27 8z" fill="#dcdde0" />
        <path d="M10 46C26 20 62 2 90 2c32 1 46 20 39 44l-6 1C127 26 114 12 90 10 60 9 32 22 10 46z" fill="#8fc42c" />
        <path d="M134 44C124 82 84 107 42 107 8 106-6 84 4 56c0 20 16 34 44 35 36-1 72-22 86-47z" fill="#1b3f98" />
        <path d="M11 63l19-10v29C20 78 14 72 11 63z" fill="#1f439c" />
        <path d="M39 29l24-13v70H39z" fill="url(#tower)" />
        <path d="M76 50l20-10v32l-20 9z" fill="#1f439c" />
        <path d="M32 51v33M65 16v70M98 40v32" stroke="#fff" strokeWidth="3" />
      </svg>
      <span className="flex flex-col pt-2">
        <span className="font-['Noto_Sans_CJK_SC',sans-serif] text-[54px] leading-[50px] font-black italic">土木工程网</span>
        <span className="font-['Open_Sans',sans-serif] text-[36px] leading-[36px] font-medium italic">www.civilcn.com</span>
      </span>
    </a>
  );
}

export default function App() {
  return (
    <div className="relative flex h-screen overflow-hidden bg-[#6a6a6a] font-['Open_Sans','Noto_Sans_CJK_SC',sans-serif]">
      <svg className="h-full w-[3px] shrink-0 bg-[#e6e6e6]" aria-hidden="true">
        <rect x="1" y="157" width="2" height="21" fill="#1d3350" />
        <rect x="1" y="236" width="2" height="17" fill="#d08a2c" />
        <rect x="1" y="277" width="2" height="20" fill="#7fb9d4" />
        <rect x="1" y="317" width="2" height="20" fill="#b8324a" />
        <rect x="1" y="357" width="2" height="20" fill="#8a4b42" />
        <rect x="1" y="397" width="2" height="20" fill="#6aaad0" />
      </svg>
      <div className="flex min-w-0 flex-1 flex-col">
        <Toolbars />
        <div className="flex min-h-0 flex-1">
          <aside className="flex w-[87px] shrink-0 items-start gap-1 border-r-2 border-[#909090]">
            <Palette>
              <PaletteGrip />
              <PaletteItems items={drawIcons} />
            </Palette>
            <Palette>
              <PaletteGrip />
              <PaletteItems items={modifyIcons} />
              <div className="h-0.5 bg-[#333]"></div>
              <PaletteGrip />
              <PaletteItems items={[...orderIcons, null, ...orderTailIcons]} />
            </Palette>
            <Palette>
              <PaletteGrip />
              <PaletteItems items={dimIcons} />
            </Palette>
          </aside>
          <main className="flex min-w-0 flex-1 flex-col">
            <div className="flex min-h-0 flex-1">
              <Canvas />
              <div className="flex w-[13px] shrink-0 flex-col items-center bg-[#f0f0f0] pt-1.5">
                <Caret d={UP} />
                <div className="mt-[400px] h-4 w-[11px] bg-[#cdcdcd]"></div>
              </div>
            </div>
            <SheetTabs />
          </main>
        </div>
      </div>
      <SaveDialog />
      <SiteBadge />
    </div>
  );
}
